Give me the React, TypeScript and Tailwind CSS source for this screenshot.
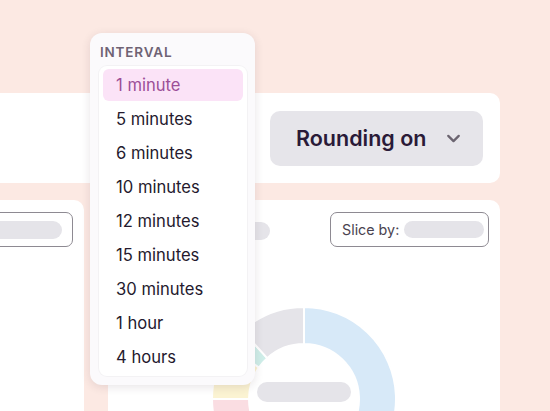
import { ChevronDown } from "lucide-react";

const intervals = [
  "1 minute",
  "5 minutes",
  "6 minutes",
  "10 minutes",
  "12 minutes",
  "15 minutes",
  "30 minutes",
  "1 hour",
  "4 hours",
];

// ring slice, angles in degrees clockwise from 12 o'clock
function slice(cx: number, cy: number, r0: number, r1: number, a0: number, a1: number) {
  const pt = (r: number, a: number) => {
    const t = ((a - 90) * Math.PI) / 180;
    return `${(cx + r * Math.cos(t)).toFixed(2)} ${(cy + r * Math.sin(t)).toFixed(2)}`;
  };
  const big = a1 - a0 > 180 ? 1 : 0;
  return `M ${pt(r1, a0)} A ${r1} ${r1} 0 ${big} 1 ${pt(r1, a1)} L ${pt(r0, a1)} A ${r0} ${r0} 0 ${big} 0 ${pt(r0, a0)} Z`;
}

const segments = [
  { from: 0, to: 175, color: "#d7e9f8" },
  { from: 175, to: 270, color: "#fadde2" },
  { from: 270, to: 305, color: "#fbf3d2" },
  { from: 305, to: 318, color: "#cfeee9" },
  { from: 318, to: 360, color: "#e5e4e9" },
];

function Donut() {
  const cx = 196;
  const cy = 152;
  return (
    <svg width="392" height="200" viewBox="0 0 392 200" className="block">
      {segments.map((s) => (
        <path
          key={s.from}
          d={slice(cx, cy, 55, 92, s.from, s.to)}
          fill={s.color}
          stroke="#ffffff"
          strokeWidth="2"
        />
      ))}
      <rect x={cx - 47} y={cy - 17} width="94" height="20" rx="10" fill="#e5e4e9" />
    </svg>
  );
}

export default function App() {
  return (
    <div className="relative h-[411px] w-[550px] overflow-hidden bg-[#fce9e3] font-['Inter','Noto_Sans',sans-serif]">
      <div className="flex flex-col gap-[17px] pt-[93px]">
        <div className="ml-[-12px] flex h-[90px] w-[512px] items-center justify-end rounded-[10px] bg-white pr-[17px]">
          <div className="flex h-[55px] w-[213px] items-center gap-[17px] rounded-[10px] bg-[#e6e5ea] pl-[26px]">
            <span className="text-[21.5px] font-semibold text-[#2a1a38]">Rounding on</span>
            <ChevronDown className="h-[21px] w-[21px] text-[#6b6470]" strokeWidth={2.6} />
          </div>
        </div>

        <div className="ml-[-12px] flex gap-[24px]">
          <div className="h-[260px] w-[96px] overflow-hidden rounded-[10px] bg-white pt-[12px]">
            <div className="ml-[-15px] flex h-[35px] w-[100px] items-center justify-end rounded-[7px] border border-[#8e8a92] pr-[10px]">
              <div className="h-[18px] w-[80px] rounded-full bg-[#e5e4e9]" />
            </div>
          </div>

          <div className="h-[260px] w-[392px] rounded-[10px] bg-white">
            <div className="flex items-start justify-between pr-[11px] pt-[12px]">
              <div className="ml-[30px] mt-[10px] h-[18px] w-[132px] rounded-full bg-[#e5e4e9]" />
              <div className="flex h-[35px] w-[159px] items-center gap-[5px] rounded-[7px] border border-[#8e8a92] pl-[11px]">
                <span className="text-[14.3px] text-[#4a4350]">Slice by:</span>
                <div className="h-[17px] w-[80px] rounded-full bg-[#e5e4e9]" />
              </div>
            </div>
            <Donut />
          </div>
        </div>
      </div>

      <div className="absolute left-[90px] top-[33px] w-[165px] rounded-[12px] bg-[#fbfafc] pb-[9px] shadow-[0_2px_10px_rgba(60,30,50,0.12)]">
        <div className="pl-[10px] pt-[11px] text-[13.5px] font-semibold leading-[16px] tracking-[0.06em] text-[#6f6374]">
          INTERVAL
        </div>
        <div className="ml-[9px] mt-[6px] flex w-[148px] flex-col gap-[2px] rounded-[8px] bg-white px-[4px] py-[3px] shadow-[0_0_0_1px_rgba(0,0,0,0.03)]">
          {intervals.map((label, i) => (
            <div
              key={label}
              className={
                i === 0
                  ? "flex h-[32px] items-center rounded-[6px] bg-[#fbe3f7] pl-[13px] text-[16.6px] text-[#9c4f98]"
                  : "flex h-[32px] items-center pl-[13px] text-[16.6px] text-[#251a2e]"
              }
            >
              {label}
            </div>
          ))}
        </div>
      </div>
    </div>
  );
}
